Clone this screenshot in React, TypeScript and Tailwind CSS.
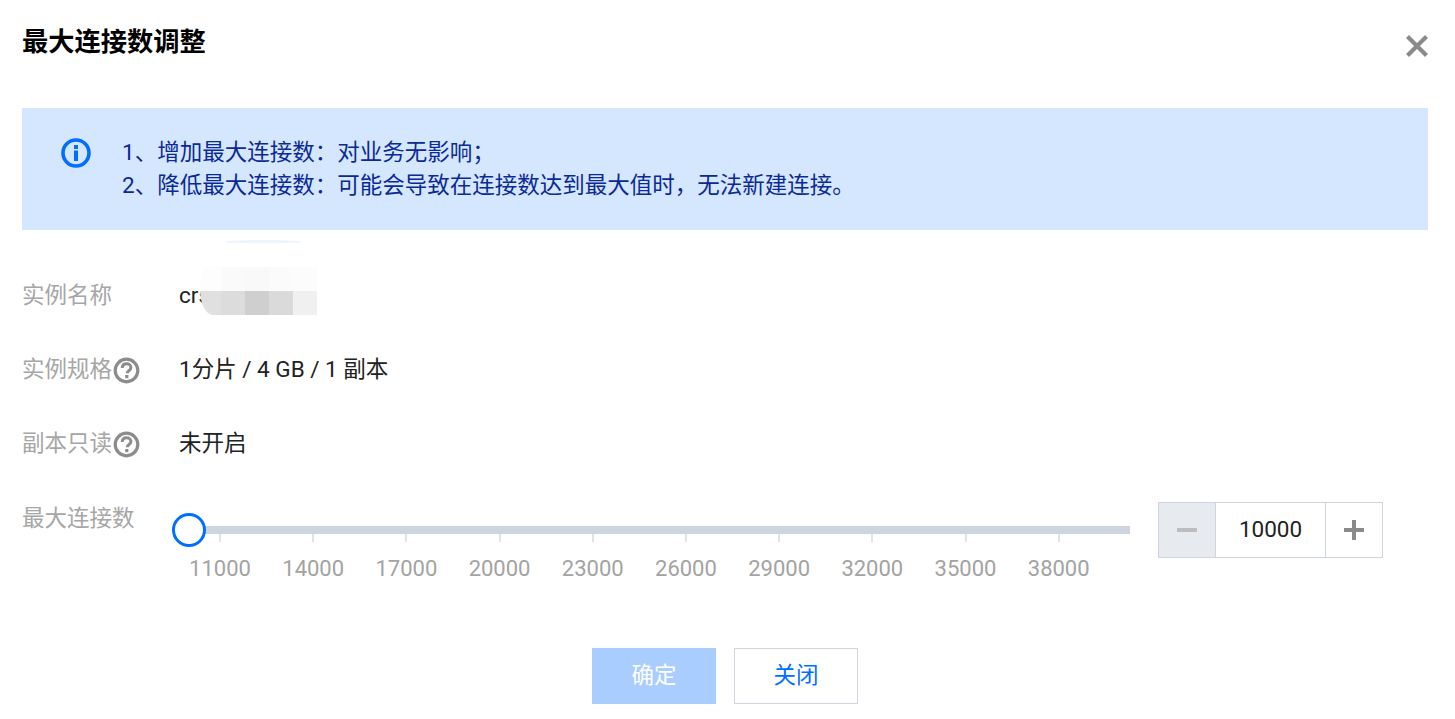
import React from "react";

const font = 'font-["Roboto","Noto_Sans_CJK_SC",sans-serif]';

function Help() {
  return (
    <svg width="27" height="27" viewBox="0 0 27 27" className="ml-[1px] shrink-0">
      <circle cx="13.5" cy="13.5" r="11.3" fill="none" stroke="#8c8c8c" strokeWidth="3.2" />
      <path d="M9.2 11c.1-2.7 1.9-4.2 4.4-4.2 2.5 0 4.3 1.5 4.3 3.6 0 1.6-.9 2.5-2.1 3.3-1.1.7-1.5 1.2-1.5 2.5" fill="none" stroke="#8c8c8c" strokeWidth="3" />
      <rect x="12.2" y="18" width="3.2" height="3.2" fill="#8c8c8c" />
    </svg>
  );
}

function Row({ label, help, children }: { label: string; help?: boolean; children: React.ReactNode }) {
  return (
    <div className="flex h-[34px] items-center">
      <div className="flex w-[157px] shrink-0 items-center text-[22.5px] text-[#a6a6a6]">
        <span>{label}</span>
        {help && <Help />}
      </div>
      <div className="text-[22.5px] text-[#222222]">{children}</div>
    </div>
  );
}

const ticks = [11000, 14000, 17000, 20000, 23000, 26000, 29000, 32000, 35000, 38000];
const mosaicTop = ["w-[21px] bg-[#fdfdfd]", "w-[24px] bg-[#fafafa]", "w-[24px] bg-[#f9f9f9]", "w-[24px] bg-[#fbfbfb]", "w-[24px] bg-[#fcfcfc]"];
const mosaicBottom = ["w-[21px] bg-[#e0e0e0]", "w-[24px] bg-[#dcdcdc]", "w-[24px] bg-[#cfcfcf]", "w-[24px] bg-[#dadada]", "w-[24px] bg-[#f0f0f0]"];

export default function App() {
  return (
    <div className={`${font} flex h-[719px] w-[1455px] flex-col overflow-hidden bg-white pr-[27px] pl-[22px]`}>
      <header className="flex h-[108px] shrink-0 items-start justify-between">
        <h1 className="mt-[24px] text-[26.25px] leading-[36px] font-bold text-black">最大连接数调整</h1>
        <svg width="24" height="24" viewBox="0 0 24 24" className="mt-[34px] mr-[-1px]">
          <path d="M2.5 2.5 21.5 21.5M21.5 2.5 2.5 21.5" stroke="#8a8a8a" strokeWidth="4.2" />
        </svg>
      </header>

      <section className="flex h-[122px] shrink-0 bg-[#d5e7ff] pt-[29px] pl-[39px] text-[22.5px] leading-[33px] text-[#0b2a94]">
        <svg width="30" height="30" viewBox="0 0 30 30" className="mt-[1px] shrink-0">
          <circle cx="15" cy="15" r="13" fill="none" stroke="#006eff" strokeWidth="3.6" />
          <rect x="13" y="7" width="4" height="4" fill="#006eff" />
          <rect x="13" y="12.5" width="4" height="10.5" fill="#006eff" />
        </svg>
        <div className="ml-[31px] mt-[-1px]">
          <div>1、增加最大连接数：对业务无影响；</div>
          <div>2、降低最大连接数：可能会导致在连接数达到最大值时，无法新建连接。</div>
        </div>
      </section>

      <div className="relative flex flex-col gap-[40px] pt-[49px]">
        <div className="absolute top-[10px] left-[205px] h-[3px] w-[73px] rounded-t-[100%] bg-[#eef5ff]" />
        <div className="relative">
          <Row label="实例名称">crs-</Row>
          <div className="absolute top-[-12px] left-[178px] flex flex-col overflow-hidden rounded-tl-[8px_24px] rounded-bl-[14px_28px]">
            <div className="flex h-[24px]">{mosaicTop.map((c) => <div key={c} className={c} />)}</div>
            <div className="flex h-[24px]">{mosaicBottom.map((c) => <div key={c} className={c} />)}</div>
          </div>
        </div>
        <Row label="实例规格" help>1分片 / 4 GB / 1 副本</Row>
        <Row label="副本只读" help>未开启</Row>
      </div>

      <div className="mt-[41px] flex items-start">
        <div className="mt-[-1px] w-[157px] shrink-0 text-[22.5px] leading-[34px] text-[#a6a6a6]">最大连接数</div>
        <div className="flex-1 pt-[24px]">
          <div className="relative ml-[10px] h-[8px] w-[941px] bg-[#cfd5de]">
            <div className="absolute top-[-13px] left-[-17px] h-[34px] w-[34px] rounded-full border-[3.5px] border-[#006eff] bg-white" />
          </div>
          <div className="ml-[-5.6px] flex w-[932px]">
            {ticks.map((t) => (
              <div key={t} className="flex w-[93.2px] flex-col items-center">
                <div className="h-[8px] w-[2px] bg-[#dfe3ea]" />
                <div className="mt-[14px] text-[22px] leading-[26px] text-[#a3a3a3]">{t}</div>
              </div>
            ))}
          </div>
        </div>
        <div className="mr-[45px] flex h-[56px] w-[225px] shrink-0 border border-[#cfd5de] text-[22.5px] text-[#222222]">
          <div className="flex w-[57px] items-center justify-center border-r border-[#cfd5de] bg-[#e7eaef]">
            <div className="h-[4px] w-[20px] bg-[#bdbdbd]" />
          </div>
          <div className="flex flex-1 items-center justify-center">10000</div>
          <div className="flex w-[57px] items-center justify-center border-l border-[#cfd5de]">
            <svg width="20" height="20" viewBox="0 0 20 20"><path d="M10 0v20M0 10h20" stroke="#8a8a8a" strokeWidth="4" /></svg>
          </div>
        </div>
      </div>

      <footer className="mt-[66px] flex justify-center gap-[18px]">
        <div className="flex h-[56px] w-[124px] items-center justify-center bg-[#a9cdff] text-[22.5px] text-white">确定</div>
        <div className="flex h-[56px] w-[124px] items-center justify-center border border-[#cfd5de] bg-white text-[22.5px] text-[#006eff]">关闭</div>
      </footer>
    </div>
  );
}
